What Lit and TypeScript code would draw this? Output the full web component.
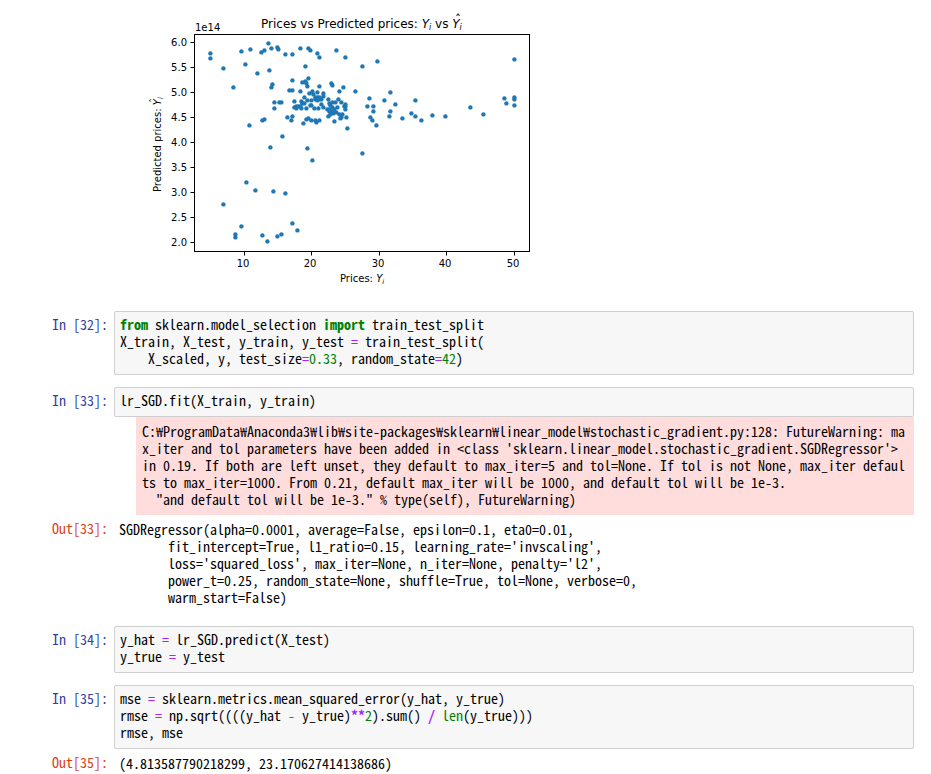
import { LitElement, html, svg, css } from "lit";
import { customElement, property } from "lit/decorators.js";

const POINTS: number[][] = [
  // left side and upper band
  [210, 53], [210, 58], [223, 68], [233, 87], [241, 51], [250, 49], [245, 64], [257, 73],
  [261, 52], [264, 50], [268, 43], [271, 48], [277, 47], [278, 49], [269, 70], [285, 54],
  [292, 54], [300, 48], [308, 48], [310, 50], [317, 53], [319, 57], [336, 50], [305, 66],
  [345, 57], [362, 66], [377, 61],
  [272, 84], [271, 87], [289, 90], [292, 90], [274, 102], [279, 102], [281, 102], [274, 108],
  [264, 119], [262, 120], [249, 125], [282, 136], [270, 147], [307, 148],
  // central cluster
  [292, 80], [302, 82], [305, 81], [308, 78], [306, 83], [307, 86], [319, 86], [331, 83],
  [332, 85], [343, 87], [339, 91], [355, 91], [300, 91], [309, 93], [312, 91], [313, 94],
  [317, 92], [323, 93], [323, 96], [304, 97], [294, 101], [301, 101], [302, 103], [304, 103],
  [307, 100], [311, 100], [315, 99], [317, 97], [319, 99], [315, 97], [319, 97], [321, 99],
  [317, 100], [321, 104], [323, 107], [311, 105], [310, 105], [294, 107], [296, 106], [298, 106],
  [300, 106], [296, 108], [301, 108], [306, 108], [314, 108], [318, 108], [328, 99], [329, 103],
  [332, 102], [335, 102], [338, 99], [341, 102], [345, 104], [345, 106], [344, 106], [345, 109],
  [337, 107], [332, 107], [330, 105], [327, 109], [329, 109], [329, 111], [332, 111], [334, 109],
  [336, 112], [333, 113], [330, 114], [328, 116], [339, 114], [342, 114], [340, 118], [341, 117],
  [346, 117], [334, 121], [347, 128], [287, 117], [292, 116], [291, 120], [303, 123], [306, 119],
  [308, 118], [311, 120], [315, 120], [316, 122], [319, 120],
  // right side
  [369, 98], [367, 106], [373, 106], [373, 111], [370, 117], [372, 120], [376, 125], [384, 100],
  [390, 92], [395, 104], [390, 111], [389, 116], [402, 118], [411, 113], [415, 100], [415, 116],
  [421, 120], [432, 115], [445, 116], [470, 107], [483, 114], [504, 98], [506, 103], [514, 59],
  [514, 97], [514, 99], [514, 105],
  // lower band
  [362, 153], [312, 160], [246, 182], [255, 190], [273, 191], [285, 193], [223, 204], [241, 226],
  [235, 234], [235, 237], [262, 235], [267, 241], [277, 236], [281, 234], [292, 223], [297, 230],
];

const X_TICKS = [
  [244, "10"], [311, "20"], [379, "30"], [446, "40"], [514, "50"],
] as const;

const Y_TICKS = ["6.0", "5.5", "5.0", "4.5", "4.0", "3.5", "3.0", "2.5", "2.0"];

@customElement("scatter-plot")
export class ScatterPlot extends LitElement {
  static styles = css`
    :host { display: block; }
    svg { display: block; width: 400px; height: 300px; font-family: "DejaVu Sans", sans-serif; }
    text { font-size: 10px; fill: #000; }
    .title { font-size: 12px; }
    .it { font-style: italic; }
    .sub { font-size: 7px; font-style: italic; }
    .title .sub { font-size: 8px; }
    .end { text-anchor: end; }
    .mid { text-anchor: middle; }
    .line { fill: none; stroke: #000; stroke-width: 1; }
    .dot { fill: #1f77b4; }
  `;

  render() {
    return html`
      <svg viewBox="140 0 400 300" role="img" aria-label="Prices vs Predicted prices">
        <text class="title" x="261" y="28">Prices vs Predicted prices: <tspan class="it">Y</tspan><tspan
          class="sub" dy="2">i</tspan><tspan dy="-2"> vs </tspan><tspan class="it">Y</tspan><tspan
          class="sub" dy="2">i</tspan></text>
        <text class="title" x="455" y="24">&#x02C6;</text>
        <text x="195" y="31">1e14</text>
        <rect class="line" x="194.5" y="34.5" width="335" height="217"></rect>
        ${X_TICKS.map(([x, label]) => svg`
          <path class="line" d="M${x + 0.5} 252v3.5"></path>
          <text class="mid" x=${x - 1} y="267">${label}</text>`)}
        ${Y_TICKS.map((label, i) => svg`
          <path class="line" d="M194 ${42.5 + i * 25}h-3.5"></path>
          <text class="end" x="187" y=${46 + i * 25}>${label}</text>`)}
        <text x="340" y="282">Prices: <tspan class="it">Y</tspan><tspan class="sub" dy="2">i</tspan></text>
        <g transform="translate(161 192) rotate(-90)">
          <text>Predicted prices: <tspan class="it">Y</tspan><tspan class="sub" dy="2">i</tspan></text>
          <text x="89" y="-3">&#x02C6;</text>
        </g>
        <g transform="translate(0.4 0.4)">
          ${POINTS.map(([x, y]) => svg`<circle class="dot" cx=${x} cy=${y} r="2.2"></circle>`)}
        </g>
      </svg>`;
  }
}

const cellFont = css`
  pre, .prompt {
    margin: 0;
    font-family: "Noto Sans Mono CJK KR", "Noto Sans CJK KR", monospace;
    font-size: 14px;
    font-weight: 300;
    font-feature-settings: "hwid" 1;
    line-height: 17px;
  }
`;

@customElement("code-cell")
export class CodeCell extends LitElement {
  @property({ type: Number }) count = 0;

  static styles = [cellFont, css`
    :host { display: flex; align-items: stretch; }
    .prompt { flex: 0 0 114px; box-sizing: border-box; padding: 5px 6px 0 0; text-align: right; color: #303f9f; white-space: pre; }
    pre { flex: 1; min-width: 0; padding: 4px 5px 7px; border: 1px solid #cfcfcf; border-radius: 2px; background: #f7f7f7; white-space: pre-wrap; }
  `];

  render() {
    return html`<div class="prompt">In [${this.count}]:</div><pre><slot></slot></pre>`;
  }
}

@customElement("output-cell")
export class OutputCell extends LitElement {
  @property({ type: Number }) count = 0;

  static styles = [cellFont, css`
    :host { display: flex; }
    .prompt { flex: 0 0 114px; box-sizing: border-box; padding: 5px 6px 0 0; text-align: right; color: #d84315; }
    pre { flex: 1; min-width: 0; padding: 6px 5px 8px; white-space: pre-wrap; }
  `];

  render() {
    return html`<div class="prompt">Out[${this.count}]:</div><pre><slot></slot></pre>`;
  }
}

const WARNING =
  "C:₩ProgramData₩Anaconda3₩lib₩site-packages₩sklearn₩linear_model₩stochastic_gradient.py:128: FutureWarning: " +
  "max_iter and tol parameters have been added in <class 'sklearn.linear_model.stochastic_gradient.SGDRegressor'> " +
  "in 0.19. If both are left unset, they default to max_iter=5 and tol=None. If tol is not None, max_iter defaults " +
  "to max_iter=1000. From 0.21, default max_iter will be 1000, and default tol will be 1e-3.\n" +
  '  "and default tol will be 1e-3." % type(self), FutureWarning)';

const REGRESSOR = `SGDRegressor(alpha=0.0001, average=False, epsilon=0.1, eta0=0.01,
       fit_intercept=True, l1_ratio=0.15, learning_rate='invscaling',
       loss='squared_loss', max_iter=None, n_iter=None, penalty='l2',
       power_t=0.25, random_state=None, shuffle=True, tol=None, verbose=0,
       warm_start=False)`;

const kw = (t: string) => html`<span class="kw">${t}</span>`;
const op = (t: string) => html`<span class="op">${t}</span>`;
const num = (t: string) => html`<span class="num">${t}</span>`;

@customElement("app-root")
export class AppRoot extends LitElement {
  static styles = [cellFont, css`
    :host { display: block; min-height: 100vh; background: #fff; color: #000; }
    .notebook { display: flex; flex-direction: column; gap: 12px; padding-right: 17px; }
    .plot { margin-left: 140px; height: 299px; }
    .stderr { margin-left: 136px; padding: 6px 6px 7px; background: #fdd; white-space: pre-wrap; word-break: break-all; }
    .kw { color: #008000; font-weight: 700; }
    .op { color: #aa22ff; }
    .strong { font-weight: 700; }
    .num { color: #008000; }
  `];

  render() {
    return html`
      <main class="notebook">
        <scatter-plot class="plot"></scatter-plot>
        <code-cell count="32">${kw("from")} sklearn.model_selection ${kw("import")} train_test_split
X_train, X_test, y_train, y_test ${op("=")} train_test_split(
    X_scaled, y, test_size${op("=")}${num("0.33")}, random_state${op("=")}${num("42")})</code-cell>
        <section>
          <code-cell count="33">lr_SGD.fit(X_train, y_train)</code-cell>
          <pre class="stderr">${WARNING}</pre>
          <output-cell count="33">${REGRESSOR}</output-cell>
        </section>
        <code-cell count="34">y_hat ${op("=")} lr_SGD.predict(X_test)
y_true ${op("=")} y_test</code-cell>
        <section>
          <code-cell count="35">mse ${op("=")} sklearn.metrics.mean_squared_error(y_hat, y_true)
rmse ${op("=")} np.sqrt((((y_hat ${op("-")} y_true)<span class="op strong">**</span>${num("2")}).sum() <span class="op strong">/</span> ${num("len")}(y_true)))
rmse, mse</code-cell>
          <output-cell count="35">(4.813587790218299, 23.170627414138686)</output-cell>
        </section>
      </main>`;
  }
}
